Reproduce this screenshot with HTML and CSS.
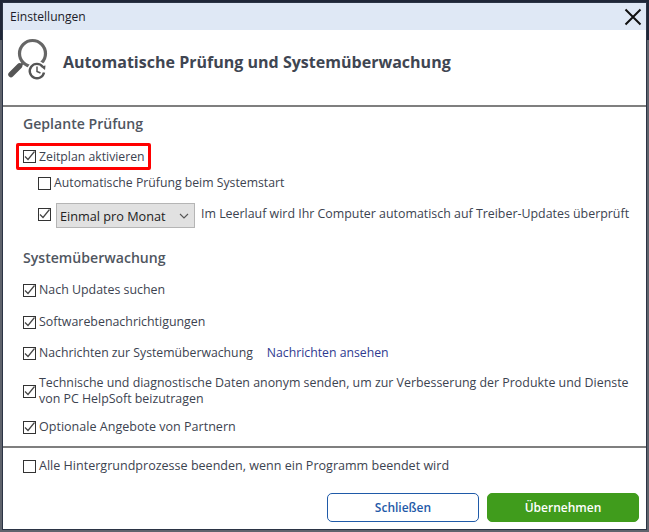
FILE: index.html
```html
<!DOCTYPE html>
<html lang="de">
<head>
<meta charset="utf-8">
<title>Einstellungen</title>
<link rel="stylesheet" href="styles.css">
</head>
<body>
<div class="window">
  <div class="titlebar">
    <span class="title">Einstellungen</span>
    <svg class="close" width="18" height="18" viewBox="0 0 18 18"><path d="M1.5 1.5L16.5 16.5M16.5 1.5L1.5 16.5" stroke="#111" stroke-width="2" fill="none"/></svg>
  </div>
  <header class="header">
    <svg class="logo" width="44" height="44" viewBox="0 0 44 44">
      <circle cx="25.5" cy="15.5" r="13" fill="none" stroke="#666" stroke-width="3.2"/>
      <path d="M16 25L13 28" stroke="#666" stroke-width="2.5"/>
      <path d="M12.5 28L4 36.5" stroke="#555" stroke-width="5.5" stroke-linecap="round"/>
      <circle cx="30" cy="33" r="10" fill="#fff"/>
      <path d="M37 34.5A7.2 7.2 0 1 1 35.5 28.5" fill="none" stroke="#555" stroke-width="2.4"/>
      <path d="M33.5 28.5L38.5 27.5L38 32Z" fill="#555"/>
      <path d="M30 28.5V33.5L33.5 35" fill="none" stroke="#555" stroke-width="1.5"/>
    </svg>
    <h1 class="heading">Automatische Prüfung und Systemüberwachung</h1>
  </header>
  <main class="content">
    <h2 class="section-title">Geplante Prüfung</h2>
    <div class="highlight">
      <label class="row tight"><span class="box checked"><svg width="13" height="13" viewBox="0 0 13 13"><path d="M2 6.5L5 9.5L11.5 1.5" fill="none" stroke="#444" stroke-width="1.2"/></svg></span>Zeitplan aktivieren</label>
    </div>
    <div class="sub">
      <label class="row tight"><span class="box"></span>Automatische Prüfung beim Systemstart</label>
      <div class="row schedule">
        <span class="box checked"><svg width="13" height="13" viewBox="0 0 13 13"><path d="M2 6.5L5 9.5L11.5 1.5" fill="none" stroke="#444" stroke-width="1.2"/></svg></span>
        <span class="select">Einmal pro Monat<svg width="10" height="6" viewBox="0 0 10 6"><path d="M1 1L5 5L9 1" fill="none" stroke="#555" stroke-width="1.1"/></svg></span>
        <span class="note">Im Leerlauf wird Ihr Computer automatisch auf Treiber-Updates überprüft</span>
      </div>
    </div>
    <h2 class="section-title second">Systemüberwachung</h2>
    <div class="list">
      <label class="row"><span class="box checked"><svg width="13" height="13" viewBox="0 0 13 13"><path d="M2 6.5L5 9.5L11.5 1.5" fill="none" stroke="#444" stroke-width="1.2"/></svg></span>Nach Updates suchen</label>
      <label class="row"><span class="box checked"><svg width="13" height="13" viewBox="0 0 13 13"><path d="M2 6.5L5 9.5L11.5 1.5" fill="none" stroke="#444" stroke-width="1.2"/></svg></span>Softwarebenachrichtigungen</label>
      <label class="row row-link tight"><span class="box checked"><svg width="13" height="13" viewBox="0 0 13 13"><path d="M2 6.5L5 9.5L11.5 1.5" fill="none" stroke="#444" stroke-width="1.2"/></svg></span>Nachrichten zur Systemüberwachung<a class="link">Nachrichten ansehen</a></label>
      <label class="row multi"><span class="box checked"><svg width="13" height="13" viewBox="0 0 13 13"><path d="M2 6.5L5 9.5L11.5 1.5" fill="none" stroke="#444" stroke-width="1.2"/></svg></span><span>Technische und diagnostische Daten anonym senden, um zur Verbesserung der Produkte und Dienste<br>von PC HelpSoft beizutragen</span></label>
      <label class="row wide"><span class="box checked"><svg width="13" height="13" viewBox="0 0 13 13"><path d="M2 6.5L5 9.5L11.5 1.5" fill="none" stroke="#444" stroke-width="1.2"/></svg></span>Optionale Angebote von Partnern</label>
    </div>
  </main>
  <footer class="footer">
    <label class="row wide"><span class="box"></span>Alle Hintergrundprozesse beenden, wenn ein Programm beendet wird</label>
    <div class="actions">
      <button class="btn secondary">Schließen</button>
      <button class="btn primary">Übernehmen</button>
    </div>
  </footer>
</div>
</body>
</html>
```
FILE: styles.css
```css
* { box-sizing: border-box; }
html, body { margin: 0; height: 100%; }
body {
  background: linear-gradient(#1f2737 0 40px, #5f636c 40px);
  padding: 2px;
  font-family: "Open Sans", "Noto Sans", sans-serif;
  font-size: 12.4px;
  color: #3c4350;
  overflow: hidden;
}
.window {
  height: 528px;
  background: #fff;
  border: 1px solid #2b3445;
  display: flex;
  flex-direction: column;
}
.titlebar {
  height: 27px;
  background: #dfe8f5;
  display: flex;
  align-items: center;
  justify-content: space-between;
  padding: 0 4px 0 7px;
  flex: none;
}
.title { color: #1c1c28; font-size: 12.1px; }
.header {
  height: 77px;
  border-bottom: 2px solid #7f7f7f;
  display: flex;
  align-items: flex-start;
  padding: 8px 0 0 4px;
  flex: none;
}
.logo { flex: none; }
.heading {
  margin: 13px 0 0 12px;
  font-size: 16.05px;
  font-weight: 700;
  color: #3f4652;
  line-height: 22px;
}
.content { padding: 7px 0 0 20px; flex: 1; }
.section-title {
  margin: 0;
  font-size: 14.1px;
  font-weight: 600;
  color: #50565f;
  line-height: 20px;
}
.section-title.second { margin-top: 20px; }
.row {
  display: flex;
  align-items: center;
  line-height: 16px;
}
.tight { font-size: 12.25px; }
.wide { font-size: 12.55px; }
.box {
  width: 13px;
  height: 13px;
  border: 1px solid #333;
  margin-right: 3px;
  flex: none;
  display: flex;
  align-items: center;
  justify-content: center;
}
.box svg { flex: none; }
.highlight {
  width: 135px;
  height: 27px;
  margin: 9px 0 0 -7px;
  border: 3px solid #f00;
  border-radius: 2px;
  padding-left: 4px;
  display: flex;
  align-items: center;
}
.sub { padding-left: 15px; }
.sub > label { margin-top: 5px; }
.schedule { margin-top: 12px; }
.schedule .box { margin: -3px 5px 0 0; }
.select {
  width: 139px;
  height: 25px;
  background: #e1e1e1;
  border: 1px solid #b5b5b5;
  color: #222;
  display: flex;
  align-items: center;
  justify-content: space-between;
  padding: 0 5px 0 3px;
  font-size: 12.7px;
}
.note { margin: -3px 0 0 6px; }
.list { margin-top: 14px; display: flex; flex-direction: column; gap: 16px; }
.list .row-link { margin-top: -1px; }
.list .multi { margin-top: -2px; }
.list .multi + .row { margin-top: -4px; }
.link { margin-left: 14px; color: #2f3a8f; }
.footer { border-top: 2px solid #7f7f7f; height: 83px; flex: none; padding: 10px 7px 0 20px; }
.actions {
  display: flex;
  justify-content: flex-end;
  gap: 8px;
  margin-top: 19px;
}
.btn {
  width: 152px;
  height: 29px;
  border-radius: 5px;
  font: 600 12px "Open Sans", "Noto Sans", sans-serif;
  padding: 0;
}
.secondary { background: #fff; border: 1px solid #1f5aa8; color: #1f5aa8; }
.primary { background: #409c1c; border: 1px solid #409c1c; color: #fff; }
```
